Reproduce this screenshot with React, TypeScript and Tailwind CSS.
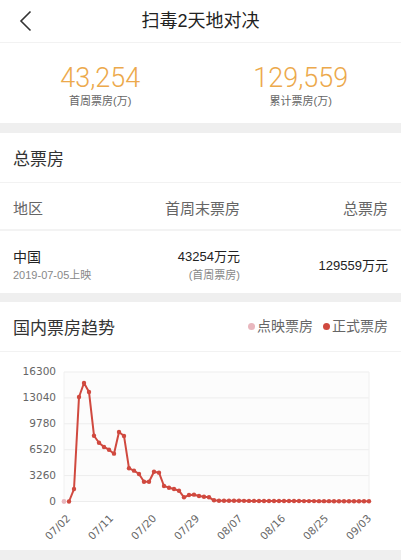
import React from "react";

// 日票房(万), 07/02 起
const daily = [
  0, 0, 1570, 13150, 14920, 13790, 8280, 7400, 6860, 6520, 6020, 8750, 8250, 4180, 3880, 3460,
  2490, 2490, 3750, 3630, 1950, 1740, 1570, 1360, 530, 820, 860, 690, 600, 530, 150, 100, 95,
  90, 85, 85, 80, 75, 75, 70, 70, 65, 65, 60, 60, 55, 55, 55, 50, 50, 50, 45, 45, 45, 40, 40, 40,
  40, 35, 35, 35, 35,
];

const yTicks = [16300, 13040, 9780, 6520, 3260, 0];
const xTicks = ["07/02", "07/11", "07/20", "07/29", "08/07", "08/16", "08/25", "09/03"];

const PLOT_L = 64;
const PLOT_R = 369;
const PLOT_T = 20;
const PLOT_B = 149.5;

const px = (i: number) => PLOT_L + i * 5;
const py = (v: number) => PLOT_B - (v / 16300) * (PLOT_B - PLOT_T);

function TrendChart() {
  const red = daily.slice(1).map((v, i) => [px(i + 1), py(v)] as const);
  return (
    <svg width={401} height={198} className="block">
      <rect x={PLOT_L} y={PLOT_T} width={PLOT_R - PLOT_L} height={PLOT_B - PLOT_T} fill="#fcfcfc" />
      {yTicks.map((t) => (
        <g key={t}>
          <line x1={PLOT_L} x2={PLOT_R} y1={py(t)} y2={py(t)} stroke="#ededed" strokeWidth={1} />
          <text
            x={56}
            y={py(t)}
            textAnchor="end"
            dominantBaseline="middle"
            fontSize={10.5}
            fill="#666"
            fontFamily="DejaVu Sans, sans-serif"
          >
            {t}
          </text>
        </g>
      ))}
      <line x1={PLOT_L} x2={PLOT_L} y1={PLOT_T} y2={PLOT_B} stroke="#f0f0f0" />
      <line x1={PLOT_R} x2={PLOT_R} y1={PLOT_T} y2={PLOT_B} stroke="#f0f0f0" />
      {xTicks.map((d, k) => (
        <text
          key={d}
          transform={`translate(${68 + k * 43 + 3}, 167) rotate(-45)`}
          textAnchor="end"
          fontSize={10.5}
          fill="#666"
          fontFamily="DejaVu Sans, sans-serif"
        >
          {d}
        </text>
      ))}
      <polyline
        points={red.map((p) => p.join(",")).join(" ")}
        fill="none"
        stroke="#d0493f"
        strokeWidth={2}
        strokeLinejoin="round"
      />
      {red.map(([x, y], i) => (
        <circle key={i} cx={x} cy={y} r={2.2} fill="#d0493f" />
      ))}
      <circle cx={px(0)} cy={py(0)} r={2.4} fill="#e9b7be" />
    </svg>
  );
}

function Stat({ value, label }: { value: string; label: string }) {
  return (
    <div className="flex-1 flex flex-col items-center">
      <span className="font-['Roboto',sans-serif] font-light text-[27px] leading-[30px] text-[#eca94c]">{value}</span>
      <span className="text-[11px] leading-4 text-[#666]">{label}</span>
    </div>
  );
}

export default function App() {
  return (
    <div className="w-[401px] h-[560px] overflow-hidden bg-white font-['Liberation_Sans','Noto_Sans_CJK_SC',sans-serif] text-[#333]">
      <div className="h-[43px] relative flex items-center justify-center border-b border-[#f2f2f2]">
        <svg className="absolute left-[18px] top-[9px]" width="16" height="24" viewBox="0 0 16 24">
          <path d="M12.5 2.5 L3 12 L12.5 21.5" fill="none" stroke="#333" strokeWidth={1.6} />
        </svg>
        <span className="text-[18px] text-[#222]">扫毒2天地对决</span>
      </div>

      <div className="h-[80px] flex items-center pt-[6px]">
        <Stat value="43,254" label="首周票房(万)" />
        <Stat value="129,559" label="累计票房(万)" />
      </div>

      <div className="h-[10px] bg-[#efefef]" />

      <div className="h-[50px] flex items-center px-[13px] pt-[5px] border-b border-[#f2f2f2]">
        <span className="text-[17px]">总票房</span>
      </div>

      <div className="h-[48px] flex items-center px-[13px] pt-[6px] text-[15px] text-[#666] border-b-2 border-[#f3f3f3]">
        <span className="flex-1">地区</span>
        <span className="w-[110px] text-right">首周末票房</span>
        <span className="w-[148px] text-right">总票房</span>
      </div>

      <div className="h-[62px] flex items-center px-[13px] pt-[6px]">
        <div className="flex-1 flex flex-col">
          <span className="text-[14px] leading-5 text-[#222]">中国</span>
          <span className="text-[11px] leading-4 text-[#888]">2019-07-05上映</span>
        </div>
        <div className="w-[110px] flex flex-col items-end">
          <span className="text-[13px] leading-5 text-[#222]">43254万元</span>
          <span className="text-[11px] leading-4 text-[#888]">(首周票房)</span>
        </div>
        <div className="w-[148px] flex justify-end pt-[2px]">
          <span className="text-[13px] text-[#222]">129559万元</span>
        </div>
      </div>

      <div className="h-[9px] bg-[#efefef]" />

      <div className="h-[50px] flex items-center justify-between px-[13px] pt-[4px] border-b border-[#f2f2f2]">
        <span className="text-[17px]">国内票房趋势</span>
        <div className="flex items-center text-[14px] text-[#666] gap-[10px] mb-[4px]">
          <span className="flex items-center gap-[2px]">
            <span className="w-[7px] h-[7px] rounded-full bg-[#e9b7be]" />
            点映票房
          </span>
          <span className="flex items-center gap-[2px]">
            <span className="w-[7px] h-[7px] rounded-full bg-[#d0493f]" />
            正式票房
          </span>
        </div>
      </div>

      <TrendChart />

      <div className="h-[12px] bg-[#efefef]" />
    </div>
  );
}
